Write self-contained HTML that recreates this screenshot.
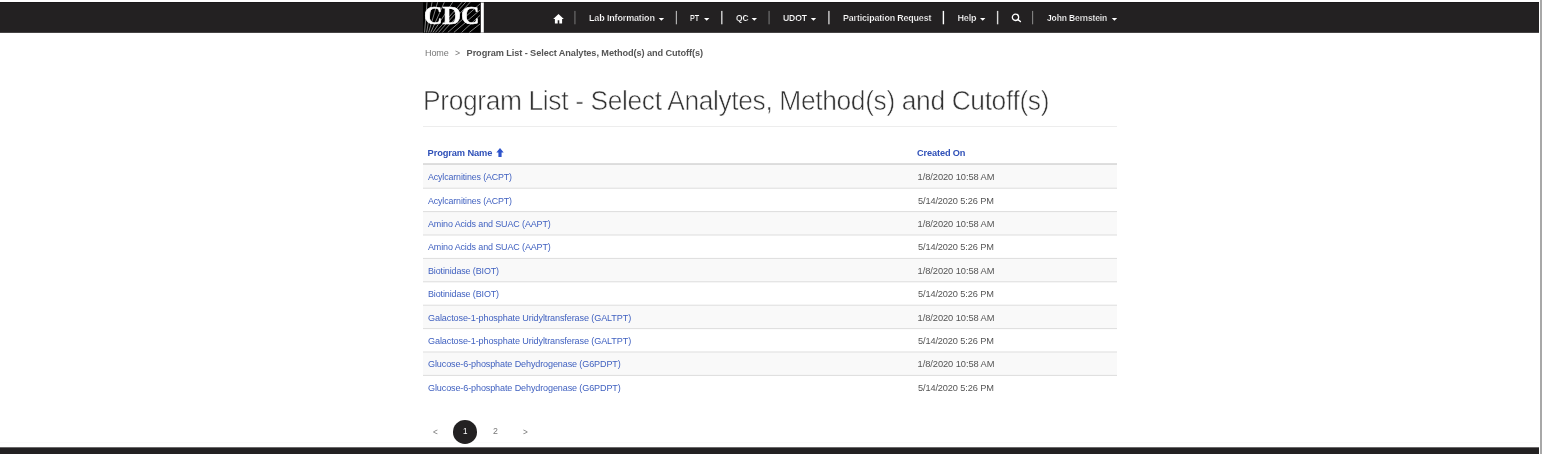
<!DOCTYPE html>
<html><head><meta charset="utf-8"><title>Program List</title>
<style>
html,body{margin:0;padding:0;background:#fff;}
body{width:1542px;height:454px;overflow:hidden;position:relative;font-family:"Liberation Sans",sans-serif;}
.t{position:absolute;white-space:nowrap;transform-origin:0 50%;}
#w{position:absolute;left:0;top:0;width:1542px;height:454px;will-change:transform;}
.b{position:absolute;}
</style></head><body><div id="w">
<div class="b" style="left:0;top:2px;width:1539px;height:31px;background:#232122"></div>
<div class="b" style="left:0;top:2px;width:1539px;height:1px;background:#1b191a"></div>
<div class="b" style="left:0;top:32px;width:1539px;height:1px;background:#454344"></div>
<div class="b" style="left:1540.4px;top:0;width:1.6px;height:454px;background:#a8a8a8"></div>
<div class="b" style="left:0;top:442px;width:1539px;height:1px;background:#fbfbfb"></div>
<div class="b" style="left:0;top:447px;width:1539px;height:7px;background:#232122"></div>
<div class="b" style="left:0;top:447px;width:1539px;height:1px;background:#6b696a"></div>
<svg class="b" style="left:423px;top:2px" width="61" height="31" viewBox="0 0 61 31">
<rect x="0.1" y="0.3" width="56.9" height="30.3" fill="#000"/>
<g stroke="#fff" stroke-width="0.6" opacity="0.85">
<line x1="1.6" y1="30.4" x2="4.0" y2="0.3"/>
<line x1="3.6" y1="30.4" x2="9.0" y2="0.3"/>
<line x1="5.6" y1="30.4" x2="14.6" y2="0.3"/>
<line x1="7.8" y1="30.4" x2="21.3" y2="0.3"/>
<line x1="10.0" y1="30.4" x2="29.6" y2="0.3"/>
<line x1="12.4" y1="30.4" x2="39.0" y2="0.3"/>
<line x1="15.5" y1="30.4" x2="42.6" y2="0.3"/>
<line x1="19.4" y1="30.4" x2="47.1" y2="0.3"/>
<line x1="24.8" y1="30.4" x2="57.0" y2="1.9"/>
<line x1="30.9" y1="30.4" x2="57.0" y2="8.0"/>
<line x1="38.6" y1="30.4" x2="57.0" y2="13.4"/>
<line x1="46.3" y1="30.4" x2="57.0" y2="22.0"/>
</g>
<text x="1.1" y="21.65" font-family="Liberation Serif" font-weight="bold" font-size="24.4" fill="#fff" stroke="#fff" stroke-width="0.55" textLength="55.2" lengthAdjust="spacingAndGlyphs">CDC</text>
<rect x="57.9" y="0.5" width="2.9" height="30.1" fill="#fff"/>
</svg>
<svg class="b" style="left:553px;top:13.6px" width="11" height="10" viewBox="0 0 11 10">
<path d="M5.5 0.1 L0.2 5.0 L1.9 5.0 L1.9 9.4 L4.7 9.4 L4.7 6.2 L6.3 6.2 L6.3 9.4 L9.1 9.4 L9.1 5.0 L10.8 5.0 Z" fill="#fff"/>
</svg>
<span class="t" style="left:589.30px;top:13px;font-size:9px;line-height:10px;height:10px;letter-spacing:-0.121px;color:#fff;font-weight:bold;transform:scaleX(0.9940);-webkit-text-stroke:0.2px #232122;">Lab Information</span>
<span class="t" style="left:690.40px;top:13px;font-size:9px;line-height:10px;height:10px;letter-spacing:-0.121px;color:#fff;font-weight:bold;transform:scaleX(0.7987);-webkit-text-stroke:0.2px #232122;">PT</span>
<span class="t" style="left:735.50px;top:13px;font-size:9px;line-height:10px;height:10px;letter-spacing:-0.121px;color:#fff;font-weight:bold;transform:scaleX(0.9343);-webkit-text-stroke:0.2px #232122;">QC</span>
<span class="t" style="left:782.70px;top:13px;font-size:9px;line-height:10px;height:10px;letter-spacing:-0.121px;color:#fff;font-weight:bold;transform:scaleX(0.9588);-webkit-text-stroke:0.2px #232122;">UDOT</span>
<span class="t" style="left:842.70px;top:13px;font-size:9px;line-height:10px;height:10px;letter-spacing:-0.121px;color:#fff;font-weight:bold;transform:scaleX(0.9811);-webkit-text-stroke:0.2px #232122;">Participation Request</span>
<span class="t" style="left:957.40px;top:13px;font-size:9px;line-height:10px;height:10px;letter-spacing:-0.121px;color:#fff;font-weight:bold;-webkit-text-stroke:0.2px #232122;">Help</span>
<span class="t" style="left:1047.20px;top:13px;font-size:9px;line-height:10px;height:10px;letter-spacing:-0.121px;color:#fff;font-weight:bold;transform:scaleX(0.9416);-webkit-text-stroke:0.2px #232122;">John Bernstein</span>
<svg class="b" style="left:0;top:0" width="1542" height="34" viewBox="0 0 1542 34"><rect x="574.15" y="10.9" width="1.5" height="13.4" fill="#5c5c5c"/><rect x="675.80" y="10.9" width="1.2" height="13.4" fill="#b0b0b0"/><rect x="721.10" y="10.9" width="1.4" height="13.4" fill="#d4d4d4"/><rect x="768.30" y="10.9" width="1.6" height="13.4" fill="#5c5c5c"/><rect x="828.15" y="10.9" width="1.5" height="13.4" fill="#c4c4c4"/><rect x="942.70" y="10.9" width="1.4" height="13.4" fill="#ffffff"/><rect x="996.90" y="10.9" width="1.4" height="13.4" fill="#dadada"/><rect x="1032.05" y="10.9" width="1.1" height="13.4" fill="#858585"/><g fill="#fff"><polygon points="658.70,17.9 664.10,17.9 661.40,20.65"/><polygon points="704.00,17.9 709.40,17.9 706.70,20.65"/><polygon points="751.60,17.9 757.00,17.9 754.30,20.65"/><polygon points="810.80,17.9 816.20,17.9 813.50,20.65"/><polygon points="980.00,17.9 985.40,17.9 982.70,20.65"/><polygon points="1111.75,17.9 1117.15,17.9 1114.45,20.65"/></g></svg>
<svg class="b" style="left:1010.6px;top:12.6px" width="11" height="10" viewBox="0 0 11 10">
<circle cx="4.5" cy="4.35" r="3.15" fill="none" stroke="#fff" stroke-width="1.3"/>
<line x1="6.9" y1="6.6" x2="9.4" y2="8.5" stroke="#fff" stroke-width="1.5" stroke-linecap="round"/>
</svg>
<span class="t" style="left:424.70px;top:48px;font-size:9.2px;line-height:10px;height:10px;letter-spacing:-0.124px;color:#777;font-weight:normal;transform:scaleX(0.9816);">Home</span>
<span class="t" style="left:454.90px;top:48px;font-size:9.2px;line-height:10px;height:10px;letter-spacing:0.000px;color:#777;font-weight:normal;transform:scaleX(0.9488);">&gt;</span>
<span class="t" style="left:466.60px;top:48px;font-size:9.2px;line-height:10px;height:10px;letter-spacing:-0.087px;color:#555;font-weight:bold;">Program List - Select Analytes, Method(s) and Cutoff(s)</span>
<span class="t" style="left:422.60px;top:84px;font-size:28.4px;line-height:32px;height:32px;letter-spacing:-0.383px;color:#333;font-weight:normal;transform:scaleX(0.9285);-webkit-text-stroke:0.6px #fff;">Program List - Select Analytes, Method(s) and Cutoff(s)</span>
<div class="b" style="left:423px;top:126.4px;width:694px;height:1px;background:#ededed"></div>
<span class="t" style="left:427.60px;top:148px;font-size:9.3px;line-height:10px;height:10px;letter-spacing:-0.122px;color:#2f50b8;font-weight:bold;">Program Name</span>
<svg class="b" style="left:496.4px;top:147.8px" width="8" height="9.2" viewBox="0 0 8 9.2">
<path d="M4 0 L7.7 4.5 L5.6 4.5 L5.6 9 L2.4 9 L2.4 4.5 L0.3 4.5 Z" fill="#2f55cc"/></svg>
<span class="t" style="left:917.00px;top:148px;font-size:9.3px;line-height:10px;height:10px;letter-spacing:-0.126px;color:#2f50b8;font-weight:bold;transform:scaleX(0.9899);">Created On</span>
<svg class="b" style="left:423px;top:160px" width="694" height="245" viewBox="0 0 694 245"><rect x="0" y="5.00" width="694" height="23.40" fill="#f9f9f9"/><rect x="0" y="51.80" width="694" height="23.40" fill="#f9f9f9"/><rect x="0" y="98.60" width="694" height="23.40" fill="#f9f9f9"/><rect x="0" y="145.40" width="694" height="23.40" fill="#f9f9f9"/><rect x="0" y="192.20" width="694" height="23.40" fill="#f9f9f9"/><rect x="0" y="27.70" width="694" height="1" fill="#ddd"/><rect x="0" y="51.10" width="694" height="1" fill="#ddd"/><rect x="0" y="74.50" width="694" height="1" fill="#ddd"/><rect x="0" y="97.90" width="694" height="1" fill="#ddd"/><rect x="0" y="121.30" width="694" height="1" fill="#ddd"/><rect x="0" y="144.70" width="694" height="1" fill="#ddd"/><rect x="0" y="168.10" width="694" height="1" fill="#ddd"/><rect x="0" y="191.50" width="694" height="1" fill="#ddd"/><rect x="0" y="214.90" width="694" height="1" fill="#ddd"/><rect x="0" y="3.1" width="694" height="1.9" fill="#dcdcdc"/></svg>
<span class="t" style="left:427.60px;top:172px;font-size:9.3px;line-height:10px;height:10px;letter-spacing:-0.126px;color:#4061c0;font-weight:normal;transform:scaleX(0.9501);">Acylcarnitines (ACPT)</span>
<span class="t" style="left:917.60px;top:172px;font-size:9.3px;line-height:10px;height:10px;letter-spacing:-0.073px;color:#555;font-weight:normal;">1/8/2020 10:58 AM</span>
<span class="t" style="left:427.60px;top:196px;font-size:9.3px;line-height:10px;height:10px;letter-spacing:-0.126px;color:#4061c0;font-weight:normal;transform:scaleX(0.9501);">Acylcarnitines (ACPT)</span>
<span class="t" style="left:917.60px;top:196px;font-size:9.3px;line-height:10px;height:10px;letter-spacing:-0.126px;color:#555;font-weight:normal;transform:scaleX(0.9913);">5/14/2020 5:26 PM</span>
<span class="t" style="left:427.60px;top:219px;font-size:9.3px;line-height:10px;height:10px;letter-spacing:-0.126px;color:#4061c0;font-weight:normal;transform:scaleX(0.9634);">Amino Acids and SUAC (AAPT)</span>
<span class="t" style="left:917.60px;top:219px;font-size:9.3px;line-height:10px;height:10px;letter-spacing:-0.073px;color:#555;font-weight:normal;">1/8/2020 10:58 AM</span>
<span class="t" style="left:427.60px;top:242px;font-size:9.3px;line-height:10px;height:10px;letter-spacing:-0.126px;color:#4061c0;font-weight:normal;transform:scaleX(0.9634);">Amino Acids and SUAC (AAPT)</span>
<span class="t" style="left:917.60px;top:242px;font-size:9.3px;line-height:10px;height:10px;letter-spacing:-0.126px;color:#555;font-weight:normal;transform:scaleX(0.9913);">5/14/2020 5:26 PM</span>
<span class="t" style="left:427.60px;top:266px;font-size:9.3px;line-height:10px;height:10px;letter-spacing:-0.126px;color:#4061c0;font-weight:normal;transform:scaleX(0.9632);">Biotinidase (BIOT)</span>
<span class="t" style="left:917.60px;top:266px;font-size:9.3px;line-height:10px;height:10px;letter-spacing:-0.073px;color:#555;font-weight:normal;">1/8/2020 10:58 AM</span>
<span class="t" style="left:427.60px;top:289px;font-size:9.3px;line-height:10px;height:10px;letter-spacing:-0.126px;color:#4061c0;font-weight:normal;transform:scaleX(0.9632);">Biotinidase (BIOT)</span>
<span class="t" style="left:917.60px;top:289px;font-size:9.3px;line-height:10px;height:10px;letter-spacing:-0.126px;color:#555;font-weight:normal;transform:scaleX(0.9913);">5/14/2020 5:26 PM</span>
<span class="t" style="left:427.60px;top:313px;font-size:9.3px;line-height:10px;height:10px;letter-spacing:-0.126px;color:#4061c0;font-weight:normal;transform:scaleX(0.9776);">Galactose-1-phosphate Uridyltransferase (GALTPT)</span>
<span class="t" style="left:917.60px;top:313px;font-size:9.3px;line-height:10px;height:10px;letter-spacing:-0.073px;color:#555;font-weight:normal;">1/8/2020 10:58 AM</span>
<span class="t" style="left:427.60px;top:336px;font-size:9.3px;line-height:10px;height:10px;letter-spacing:-0.126px;color:#4061c0;font-weight:normal;transform:scaleX(0.9776);">Galactose-1-phosphate Uridyltransferase (GALTPT)</span>
<span class="t" style="left:917.60px;top:336px;font-size:9.3px;line-height:10px;height:10px;letter-spacing:-0.126px;color:#555;font-weight:normal;transform:scaleX(0.9913);">5/14/2020 5:26 PM</span>
<span class="t" style="left:427.60px;top:359px;font-size:9.3px;line-height:10px;height:10px;letter-spacing:-0.126px;color:#4061c0;font-weight:normal;transform:scaleX(0.9740);">Glucose-6-phosphate Dehydrogenase (G6PDPT)</span>
<span class="t" style="left:917.60px;top:359px;font-size:9.3px;line-height:10px;height:10px;letter-spacing:-0.073px;color:#555;font-weight:normal;">1/8/2020 10:58 AM</span>
<span class="t" style="left:427.60px;top:383px;font-size:9.3px;line-height:10px;height:10px;letter-spacing:-0.126px;color:#4061c0;font-weight:normal;transform:scaleX(0.9740);">Glucose-6-phosphate Dehydrogenase (G6PDPT)</span>
<span class="t" style="left:917.60px;top:383px;font-size:9.3px;line-height:10px;height:10px;letter-spacing:-0.126px;color:#555;font-weight:normal;transform:scaleX(0.9913);">5/14/2020 5:26 PM</span>
<span class="t" style="left:432.60px;top:427px;font-size:9px;line-height:10px;height:10px;letter-spacing:0.000px;color:#777;font-weight:normal;transform:scaleX(0.9116);">&lt;</span>
<div class="b" style="left:452.9px;top:420px;width:24.2px;height:23.8px;border-radius:50%;background:#232122"></div>
<span class="t" style="left:462.80px;top:426px;font-size:9px;line-height:10px;height:10px;letter-spacing:0.000px;color:#fff;font-weight:normal;transform:scaleX(0.8972);">1</span>
<span class="t" style="left:492.90px;top:426px;font-size:9px;line-height:10px;height:10px;letter-spacing:0.000px;color:#777;font-weight:normal;transform:scaleX(0.9769);">2</span>
<span class="t" style="left:523.20px;top:427px;font-size:9px;line-height:10px;height:10px;letter-spacing:0.000px;color:#777;font-weight:normal;transform:scaleX(0.9116);">&gt;</span>
</div></body></html>
